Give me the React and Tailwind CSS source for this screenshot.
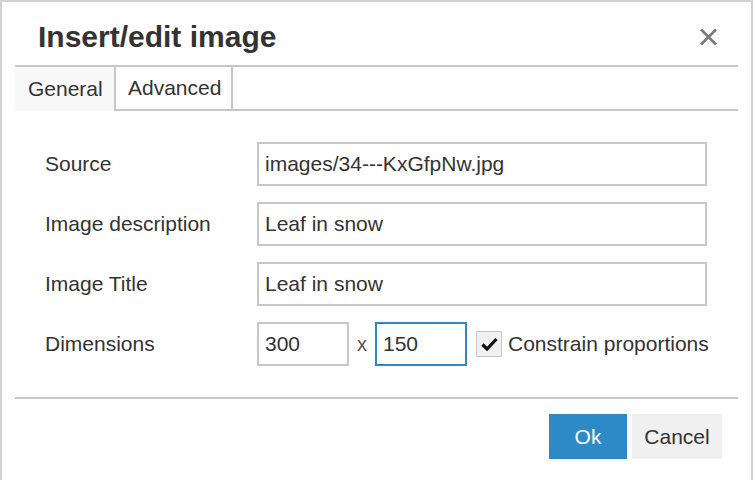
import { useState } from "react";

const Field = ({ label, value }) => (
  <div className="flex items-center h-[44px]">
    <label className="w-[212px] text-[21px]">{label}</label>
    <input
      className="w-[450px] h-[44px] px-[6px] text-[21px] text-[#333] border-2 border-[#c8c8c8] outline-none"
      defaultValue={value}
    />
  </div>
);

const App = () => {
  const [constrain, setConstrain] = useState(true);

  return (
    <div className="w-[753px] h-[490px] bg-white border-2 border-[#d2d2d2] font-['Liberation_Sans',Arial,sans-serif] text-[#333]">
      {/* Header */}
      <div className="mx-[13px] h-[65px] flex items-center justify-between border-b-2 border-[#c8c8c8]">
        <h1 className="pl-[23px] pt-[6px] text-[30px] font-bold leading-none">Insert/edit image</h1>
        <button className="mr-[20px] mt-[7px] text-[#777]" aria-label="Close">
          <svg width="19" height="18" viewBox="0 0 19 18">
            <path d="M2 1.5 L17 16.5 M17 1.5 L2 16.5" stroke="#7a7a7a" strokeWidth="2.6" />
          </svg>
        </button>
      </div>

      {/* Tabs */}
      <div className="mx-[13px] flex h-[44px]">
        <div className="w-[99px] bg-[#f8f8f8] flex items-center pl-[13px] text-[21px]">General</div>
        <div className="w-[119px] border-x-2 border-b-2 border-[#c8c8c8] flex items-center pl-[12px] text-[21px]">
          Advanced
        </div>
        <div className="flex-1 border-b-2 border-[#c8c8c8]" />
      </div>

      {/* Form */}
      <div className="mx-[13px] border-b-2 border-[#c8c8c8] pl-[30px] pt-[31px] pb-[31px] flex flex-col gap-[16px]">
        <Field label="Source" value="images/34---KxGfpNw.jpg" />
        <Field label="Image description" value="Leaf in snow" />
        <Field label="Image Title" value="Leaf in snow" />
        <div className="flex items-center h-[44px]">
          <label className="w-[212px] text-[21px]">Dimensions</label>
          <input
            className="w-[92px] h-[44px] px-[6px] text-[21px] text-[#333] border-2 border-[#c8c8c8] outline-none"
            defaultValue="300"
          />
          <span className="w-[26px] text-center text-[20px] text-[#555]">x</span>
          <input
            className="w-[92px] h-[44px] px-[6px] text-[21px] text-[#333] border-2 border-[#2d8ac7] outline-none"
            defaultValue="150"
          />
          <button
            onClick={() => setConstrain(!constrain)}
            className="ml-[9px] w-[26px] h-[26px] bg-[#f0f0f0] border border-[#c8c8c8] flex items-center justify-center"
          >
            {constrain && (
              <svg width="17" height="14" viewBox="0 0 17 14">
                <path d="M1.5 7.5 L6 12 L15.5 2" stroke="#111" strokeWidth="3.2" fill="none" />
              </svg>
            )}
          </button>
          <span className="ml-[6px] text-[21px]">Constrain proportions</span>
        </div>
      </div>

      {/* Footer */}
      <div className="mx-[13px] pt-[15px] pr-[16px] flex justify-end gap-[5px]">
        <button className="w-[78px] h-[45px] bg-[#2d8ac7] text-white text-[21px]">Ok</button>
        <button className="w-[90px] h-[45px] bg-[#f0f0f0] text-[#333] text-[21px]">Cancel</button>
      </div>
    </div>
  );
};

export default App;
